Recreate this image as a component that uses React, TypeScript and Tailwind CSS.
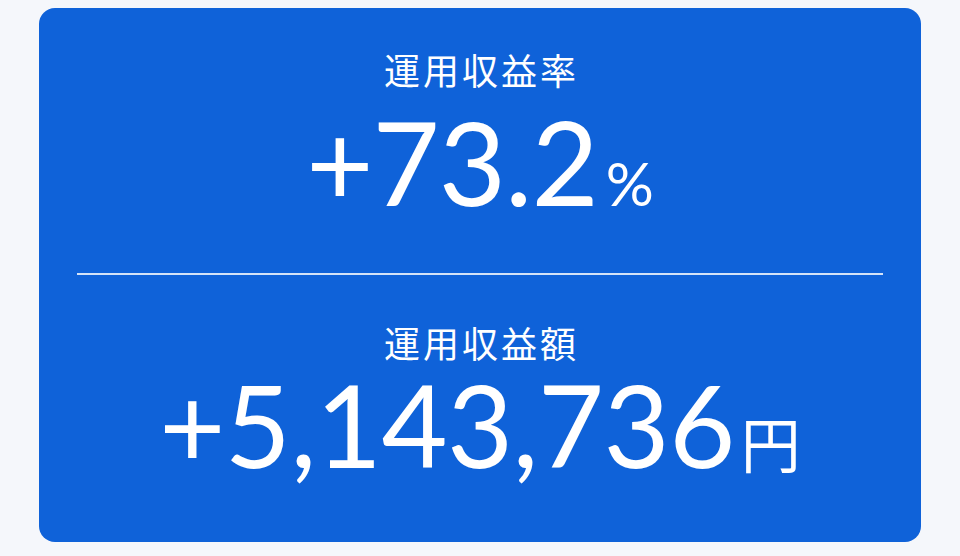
const stats = [
  { label: "運用収益率", value: "+73.2", unit: "%" },
  { label: "運用収益額", value: "+5,143,736", unit: "円" },
];

const App = () => {
  return (
    <div className="w-[960px] h-[556px] bg-[#f5f7fb] pt-2 px-[39px] font-['Lato','Noto_Sans_CJK_JP',sans-serif]">
      <div className="h-[534px] bg-[#0f62d9] rounded-[16px] px-[38px] flex flex-col text-white">
        {/* rate */}
        <div className="h-[265px] flex flex-col items-center pt-[49px]">
          <div className="text-[36px] leading-[0.7] tracking-[3px] pl-[3px] font-['Noto_Sans_CJK_JP',sans-serif]">
            {stats[0].label}
          </div>
          <div className="mt-[36px] flex items-baseline leading-[0.75]">
            <span className="text-[116px] tracking-[-1px]">{stats[0].value}</span>
            <span className="text-[60px] ml-[8px]">{stats[0].unit}</span>
          </div>
        </div>
        <div className="h-[2px] bg-[#d4e3f8]" />
        {/* amount */}
        <div className="flex-1 flex flex-col items-center pt-[55px]">
          <div className="text-[36px] leading-[0.7] tracking-[3px] pl-[3px] font-['Noto_Sans_CJK_JP',sans-serif]">
            {stats[1].label}
          </div>
          <div className="mt-[26px] flex items-baseline leading-[0.75]">
            <span className="text-[114px] tracking-[-0.5px]">{stats[1].value}</span>
            <span className="text-[60px] ml-[6px] font-['Noto_Sans_CJK_JP',sans-serif]">{stats[1].unit}</span>
          </div>
        </div>
      </div>
    </div>
  );
};

export default App;
